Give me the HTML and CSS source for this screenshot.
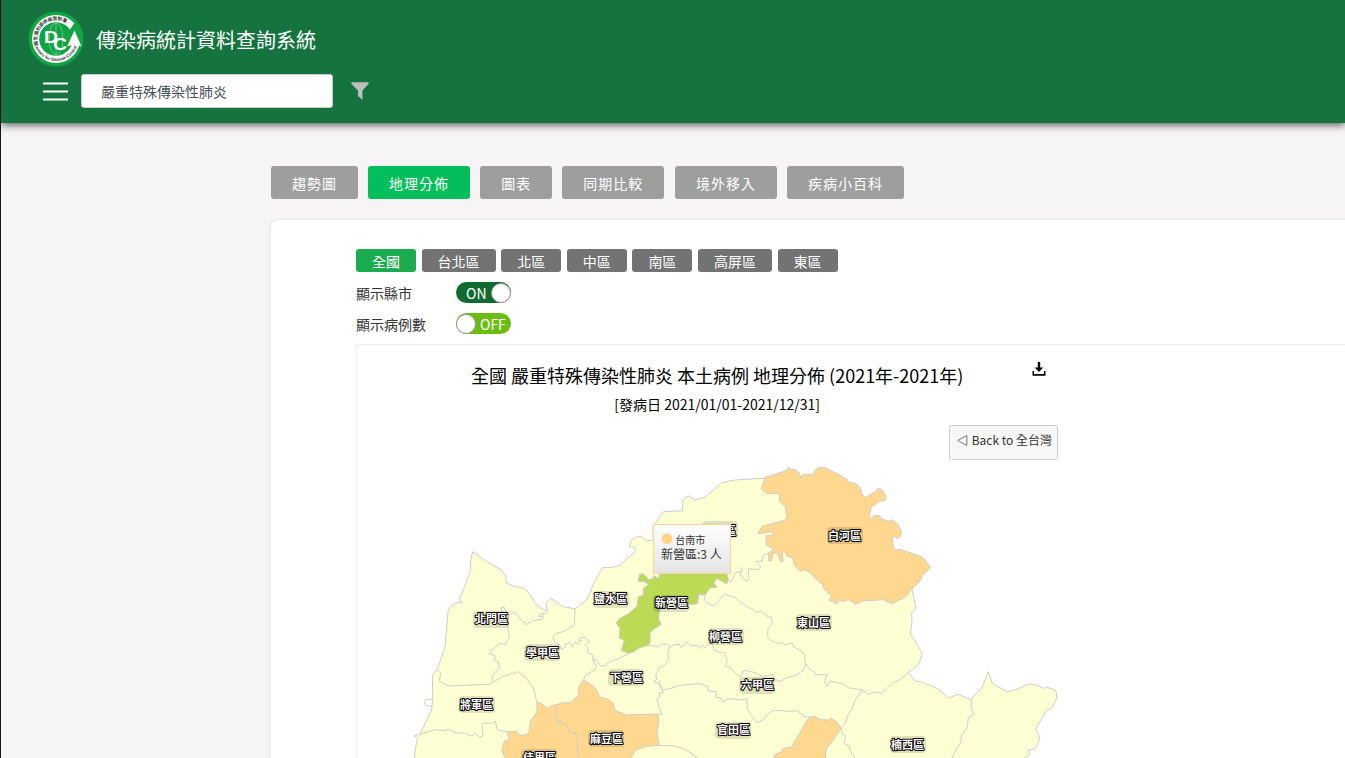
FILE: index.html
```html
<!DOCTYPE html>
<html lang="zh-Hant">
<head>
<meta charset="utf-8">
<title>傳染病統計資料查詢系統</title>
<link rel="stylesheet" href="styles.css">
</head>
<body>
<header class="header">
  <div class="brand">
    <svg class="logo" width="56" height="56" viewBox="0 0 56 56">
      <defs>
        <path id="ring-top" d="M10.200 34A18.800 18.800 0 0 1 43.500 17.300"/>
        <path id="ring-bottom" d="M6.500 33.500A22.200 22.200 0 0 0 49.600 33"/>
      </defs>
      <circle cx="28" cy="28" r="27.500" fill="#12a345"/>
      <circle cx="28" cy="28" r="24" fill="#fff"/>
      <circle cx="28" cy="28" r="16.800" fill="#12a345"/>
      <path d="M41 20L47 11 53.500 20 54 34 48 30 40 34Z" fill="#12a345"/>
      <path d="M46.500 19.500L53.500 35.500 49.500 34Q47 42 40 45.500L36.500 42Q42.500 39 44 34L39 35.500Z" fill="#fff"/>
      <g fill="none" stroke="#8bd39d" stroke-width=".7"><ellipse cx="28" cy="28" rx="7" ry="16"/><path d="M28 12v32"/></g>
      <text class="logo-initial" x="16" y="32" textLength="14" lengthAdjust="spacingAndGlyphs">D</text>
      <text class="logo-initial" x="25" y="39" textLength="14" lengthAdjust="spacingAndGlyphs">C</text>
      <text class="logo-ring"><textPath href="#ring-top" textLength="46">衛生福利部疾病管制署</textPath></text>
      <text class="logo-ring logo-latin"><textPath href="#ring-bottom" textLength="56">Centers for Disease Control</textPath></text>
    </svg>
    <h1 class="site-title">傳染病統計資料查詢系統</h1>
  </div>
  <div class="search-row">
    <svg class="menu" width="26" height="19" viewBox="0 0 26 19"><path d="M0 1.500h25M0 9.500h25M0 17.500h25" stroke="#fff" stroke-width="2"/></svg>
    <div class="search">嚴重特殊傳染性肺炎</div>
    <svg class="filter" width="18" height="18" viewBox="0 0 18 18"><path d="M.4.300h17.200v1.500L11.500 8.500V18L7 14V8.500L.4 1.800Z" fill="#bdbdbd"/></svg>
  </div>
</header>
<main class="content">
  <nav class="tabs">
    <span class="tab">趨勢圖</span><span class="tab tab-active">地理分佈</span><span class="tab">圖表</span><span class="tab">同期比較</span><span class="tab">境外移入</span><span class="tab">疾病小百科</span>
  </nav>
  <section class="panel">
    <div class="regions">
      <span class="region region-active">全國</span><span class="region">台北區</span><span class="region">北區</span><span class="region">中區</span><span class="region">南區</span><span class="region">高屏區</span><span class="region">東區</span>
    </div>
    <div class="option"><span class="option-label">顯示縣市</span><span class="switch switch-on"><span>ON</span><i class="knob"></i></span></div>
    <div class="option"><span class="option-label">顯示病例數</span><span class="switch"><i class="knob"></i><span>OFF</span></span></div>
    <div class="chart">
      <svg class="map" width="988" height="413" viewBox="357 345 988 413">
        <defs>
          <linearGradient id="tip" x1="0" y1="0" x2="0" y2="1"><stop offset="0" stop-color="#fff"/><stop offset="1" stop-color="#e4e4e4"/></linearGradient>
        </defs>
        <text class="chart-title" x="717.200" y="383">全國 嚴重特殊傳染性肺炎 本土病例 地理分佈 (2021年-2021年)</text>
        <text class="chart-subtitle" x="717.200" y="410">[發病日 2021/01/01-2021/12/31]</text>
        <path d="M1037.800 362h2.400v5.500h3l-4.200 4.500-4.200-4.500h3zM1032.500 371h1.500v3h10v-3h1.500v4.800h-13z" fill="#000"/>
        <rect x="949.500" y="425.500" width="108" height="34" rx="2" fill="#f7f7f7" stroke="#ccc"/>
        <path d="M966.800 435.500v10l-9-5z" fill="none" stroke="#555" stroke-width=".8"/>
        <text class="back" x="971.700" y="445">Back to 全台灣</text>

        <path class="area" d="M414.300 760L415 750 417.700 738.300 414 736 420 734 431.700 710 432.700 693 432.300 675 437.300 669.300 445 646.700 448 611.700 450 606.700 455 603.300 462 602 459 600 463.300 590 470.300 571.700 470.700 560 472.700 551.700 486.700 561.700 500 569 506 575.700V582.700L515 586.700 522 587.500 528.300 591.700 535 603.300 543.300 610H547.700L546 603.300 550.700 598.300 563.300 606.700 575 608.700 586.700 600 590 593 594.300 581.700 602.300 567.700 612 567.500 620 565 635 551.700V547.700L629 546.700 631.700 540 636 537 641.700 536.700 646.700 540.700 653 540V526.700L663.300 511.700 682.700 510.700V500L688.300 495.700 695 500 705 497.300 721.700 482.700 735 480 763.300 478.300 790 470 912 588.300 916 608.300 911.700 613 912 622 910.300 634 916 642 922.300 654 918.300 665 908.300 672.300 915 681 920.700 681.700 933.300 686.700 940 690 948.300 698.300 958.300 694.300 971.700 700 973.300 696.700 981.700 688.300 988.300 671.700 992.300 683.300 1007.300 691.700 1015 690 1028.300 684 1036.700 685 1043.300 688.300 1047.700 687.300 1056 690.700 1056.700 698.300 1051.700 708.300 1046.700 710 1036 728.300 1040 738.300 1035 749 1028 750 1030 754 1022 760Z"/>
        <ellipse cx="428.700" cy="702.700" rx="4.300" ry="3.500" class="islet"/>

        <g transform="translate(740 455) scale(.33333)">
          <path class="area orange" d="M77 66L100 60 137 47 147 36 152 44 166 43 177 53 183 69 188 59 220 58 224 46 235 38 253 37 265 43 290 55 320 72 325 80 347 86 362 100 366 118 376 127 410 107 412 101 422 102 430 109 439 127 434 137 418 139 409 147 394 157 390 172 389 187 394 191 403 181 420 183 423 191 450 199 456 194 474 208 485 232 481 245 473 251 462 243 457 252 460 275 466 285 480 283 525 298 548 307 561 322 572 338 547 362 544 374 515 403 495 427 455 446 430 434 369 438 347 448 327 434 305 439 298 433 295 442 285 447 280 440 267 436 274 424 250 400 248 388 225 370 208 350 190 345 180 349 163 330 157 308 143 305 133 289 126 293 130 320 121 320 113 296 101 292 94 318 86 316 86 294 102 281 79 271 78 243 98 241 98 230 54 236 66 214 133 196 141 187 136 154 119 140 119 117 79 115 64 100Z"/>
          <path class="line" d="M86 294L69 302 67 318 47 319 62 334 56 344 26 341 24 351 28 365 23 379 11 373 0 357 6 335M0 442L15 450 22 458 36 460 45 472 62 469 75 477 83 486 94 486 97 508 84 520 83 545 90 555 100 560 116 566 125 561 132 569 142 568 156 564 161 576 185 588 194 602 197 630"/>
        </g>
        <g transform="translate(580 460) scale(.33333)">
          <path class="area green" d="M240 341L440 341 445 358 440 372 410 355 401 371 412 382 390 384 375 405 356 402 352 431 330 434 240 443 236 475 243 493 217 511 210 520 211 545 205 556 177 564 162 575 145 580 124 571 133 540 118 535 120 505 108 488 120 475 143 463 170 440 175 410 190 406 190 386 206 373 190 364 175 365 178 344 188 340 201 352 205 360 218 356 222 347 235 355Z"/>
          <path class="line" d="M352 431L358 403 372 406 376 425 400 439 417 421 433 403 465 412 480 425M445 360L453 366 466 338 486 335M205 556L237 560 246 552 265 553 269 562 281 555 298 552 303 562 322 546 333 558 352 555 358 565 366 555 374 564 384 552M145 580L120 594"/>
        </g>
        <g transform="translate(400 540) scale(.33333)">
          <path class="line" d="M112 388L122 400 118 423 146 438 268 433 310 409 354 395 380 416 400 445 411 487M275 425L280 401 298 386 295 366 283 360 285 347 267 341 285 320 303 309 316 313 328 290 323 260 325 224 306 216 304 202 313 202 316 214 327 226 343 216 363 240 377 254 400 242 427 238 430 227 416 231 420 221 436 221 441 210M525 206L523 256 490 275 466 281 459 293 464 308 478 312 484 328 498 320 493 314 511 308 517 320 526 305 536 313 544 302 534 300 540 294 557 292 568 306 555 314 564 325 563 338 579 346 578 359 590 359 600 377 612 378 632 364 660 354M578 359L590 379 582 391 557 405 550 421"/>
          <path class="area orange" d="M411 487L424 490 440 504 460 496 485 489 512 488 536 463 535 443 550 420 570 432 586 443 600 472 625 478 640 490 644 511 680 525 774 522 776 545 771 580 778 617 774 636 740 639 710 646 695 665H320L309 640 305 629 313 603 328 600 322 576 349 574 360 586 381 584 388 571 391 543 411 516Z"/>
          <path class="line" d="M460 496L473 505 465 526 479 541 471 546 500 554 508 577 530 582 533 608 532 640 538 660M60 583L104 569 135 572 145 568 168 579 193 579 215 588 226 579 238 593 249 588 246 550 280 549 286 543 292 570 310 573 322 576"/>
        </g>
        <g transform="translate(600 600) scale(.33333)">
          <path class="area" d="M174 436L225 438 260 450 300 480H90L107 450 140 439Z"/>
          <path class="line" d="M209 142L206 150 203 160 207 178 196 194 179 204 167 223 170 238 161 246 173 247 188 270 210 266 240 256 300 251 325 261 322 272 350 276 346 291 364 294 367 305 390 295 420 300 440 297 442 328 452 345 472 368 490 360 499 345 520 331 570 334 590 332 615 350 628 350M178 241L183 260 190 278 177 278 180 290 171 296 176 320 182 331 186 344 176 340M324 132L336 132 345 153 374 159 382 183 376 197 394 205 413 228 425 228 428 215 440 211 465 218 488 229 517 224 526 239 543 245 555 235 590 225 610 210 617 193"/>
        </g>
        <g transform="translate(800 600) scale(.33333)">
          <path class="area orange" d="M28 352L45 349 60 359 86 360 93 354 112 367 123 385 100 420 80 445 74 485H-80L-76 463 -55 456 -52 446 -22 440 -20 430 0 398 16 368Z"/>
          <path class="line" d="M16 194L44 218 47 224 82 224 73 250 82 258 90 243 130 252 145 263 187 270 204 283 222 276 243 280 260 266 275 250 300 239 325 217M187 270L165 300 157 326 145 343 135 371 123 383 128 401 137 410 132 430 146 438 152 455 165 474M515 300L513 320 521 345 505 352 502 380 484 409 484 423 455 474"/>
        </g>

        <g class="labels">
          <g><rect x="702" y="521" width="36" height="17" rx="4"/><text x="719.500" y="535">後壁區</text></g>
          <g><rect x="827" y="527" width="36" height="17" rx="4"/><text x="844.500" y="540">白河區</text></g>
          <g><rect x="593" y="591" width="36" height="17" rx="4"/><text x="610.500" y="603">鹽水區</text></g>
          <g><rect x="653" y="595" width="36" height="17" rx="4"/><text x="671.500" y="607">新營區</text></g>
          <g><rect x="473" y="611" width="36" height="17" rx="4"/><text x="491.500" y="623">北門區</text></g>
          <g><rect x="796" y="614" width="36" height="17" rx="4"/><text x="813.500" y="627">東山區</text></g>
          <g><rect x="708" y="628" width="36" height="17" rx="4"/><text x="725.500" y="641">柳營區</text></g>
          <g><rect x="524" y="644" width="36" height="17" rx="4"/><text x="542.500" y="657">學甲區</text></g>
          <g><rect x="608" y="669" width="36" height="17" rx="4"/><text x="626.500" y="682">下營區</text></g>
          <g><rect x="739" y="677" width="36" height="17" rx="4"/><text x="757.500" y="689">六甲區</text></g>
          <g><rect x="459" y="696" width="36" height="17" rx="4"/><text x="476.500" y="709">將軍區</text></g>
          <g><rect x="715" y="722" width="36" height="17" rx="4"/><text x="733.500" y="734">官田區</text></g>
          <g><rect x="588" y="730" width="36" height="17" rx="4"/><text x="606.500" y="743">麻豆區</text></g>
          <g><rect x="890" y="736" width="36" height="17" rx="4"/><text x="907.500" y="749">楠西區</text></g>
          <g><rect x="521" y="749" width="36" height="17" rx="4"/><text x="539.500" y="762">佳里區</text></g>
        </g>
        <rect x="653.500" y="524.500" width="77" height="49" fill="url(#tip)" stroke="#ffd88f"/>
        <circle cx="667" cy="538.700" r="5.500" fill="#ffd58a"/>
        <text class="tip-head" x="675.300" y="544">台南市</text>
        <text class="tip-body" x="661" y="559">新營區:3 人</text>
      </svg>
    </div>
  </section>
</main>
</body>
</html>
```
FILE: styles.css
```css
* { box-sizing: border-box; }
html { overflow: hidden; }
body {
  margin: 0;
  height: 758px;
  overflow: hidden;
  border-left: 1px solid #151515;
  background: #f6f4f5;
  color: #333;
  font-family: "Noto Sans CJK TC", sans-serif;
  font-size: 14px;
}
.header {
  height: 123px;
  padding: 12px 0 0 27px;
  background: #15733f;
  box-shadow: 0 2px 8px rgba(0, 0, 0, .65);
}
.brand { display: flex; align-items: center; height: 56px; }
.logo { margin: -1px 0 1px; }
.logo-initial { fill: #fff; font: bold 17px "Liberation Sans", sans-serif; }
.logo-ring { fill: #333; font-size: 4.600px; font-weight: 700; }
.logo-latin { font: bold 4.300px "Liberation Sans", sans-serif; }
.site-title { margin: 0 0 0 12px; color: #fff; font-size: 20px; font-weight: 400; line-height: 30px; }
.search-row { display: flex; align-items: center; margin-top: 6px; padding-left: 15px; }
.search {
  width: 252px;
  height: 34px;
  margin: 0 18px 0 12px;
  padding-left: 19px;
  border: 1px solid #ccc;
  border-radius: 3px;
  background: #fff;
  color: #495057;
  line-height: 32px;
}
.content { padding: 43px 0 0 268px; }
.tabs { display: flex; gap: 10.100px; padding-left: 2px; }
.tab {
  height: 33px;
  padding: 0 21px;
  border-radius: 3px;
  background: #9e9e9e;
  color: #fff;
  line-height: 34px;
  letter-spacing: 1px;
  white-space: nowrap;
}
.tab:nth-child(5) { margin-left: .6px; }
.tab-active { background: #04be5b; }
.panel {
  width: 1100px;
  height: 540px;
  margin-top: 19px;
  padding: 29px 0 0 85px;
  border: 2px solid #eee;
  border-bottom: 0;
  border-radius: 10px 0 0 0;
  background: #fff;
}
.regions { display: flex; gap: 5.600px; margin-bottom: 10px; }
.region {
  height: 23px;
  padding: 0 16px;
  border-radius: 3px;
  background: #737373;
  color: #fff;
  line-height: 24px;
}
.region-active { background: #1bac4f; }
.option { display: flex; height: 21px; margin-bottom: 10px; line-height: 22px; }
.option-label { width: 100px; }
.switch {
  display: flex;
  align-items: center;
  gap: 4px;
  width: 55px;
  height: 21px;
  border-radius: 11px;
  background: #6cbd11;
  color: #fff;
  line-height: 22px;
}
.switch-on { padding-left: 10px; background: #116b30; }
.knob { width: 20px; height: 20px; border: 1px solid #999; border-radius: 50%; background: #fff; flex: none; }
.chart { width: 990px; border: 1px solid #eee; border-bottom: 0; }
.map { display: block; }
.area { fill: #ffffd4; stroke: #ccc; stroke-width: 1; }
g > .area { stroke-width: 3; }
.orange { fill: #ffd88f; }
.green { fill: #bbda55; }
.line { fill: none; stroke: #ccc; stroke-width: 3; stroke-linejoin: round; }
.islet { fill: #fff; stroke: #ccc; }
.chart-title { font-size: 18px; text-anchor: middle; fill: #000; }
.chart-subtitle { font-size: 14px; text-anchor: middle; fill: #000; }
.back { font-size: 12px; fill: #333; }
.labels rect { fill: rgba(0, 0, 0, .12); }
.labels text {
  font-size: 11px;
  font-weight: 700;
  text-anchor: middle;
  fill: #fff;
  stroke: #000;
  stroke-width: 2px;
  stroke-linejoin: round;
  paint-order: stroke;
}
.tip-head { font-size: 10px; fill: #333; }
.tip-body { font-size: 12px; fill: #333; }
```
